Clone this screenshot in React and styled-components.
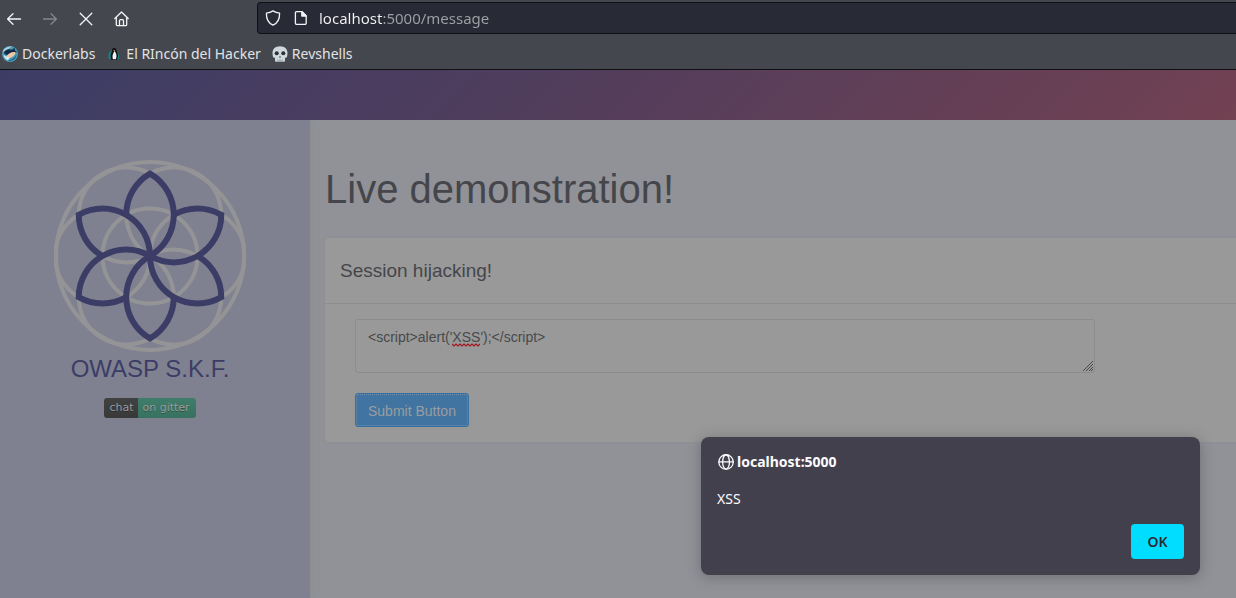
import React from "react";
import styled, { createGlobalStyle } from "styled-components";

const UI_FONT = '"Noto Sans", sans-serif';
const PAGE_FONT = '"Liberation Sans", Arial, sans-serif';

const GlobalStyle = createGlobalStyle`
  *, *::before, *::after { box-sizing: border-box; }
  body { margin: 0; background: #919297; }
  button, input, textarea { font: inherit; margin: 0; }
`;

const Window = styled.div`
  position: relative;
  min-height: 100vh;
  display: flex;
  flex-direction: column;
  overflow: hidden;
  font-family: ${UI_FONT};
`;

const Chrome = styled.header`
  background: #44474d;
  border-bottom: 1px solid #0f1014;
`;

const NavBar = styled.div`
  display: flex;
  align-items: center;
  height: 38px;
`;

const NavButtons = styled.nav`
  display: flex;
  flex: none;
  gap: 8px;
  width: 257px;
`;

const IconButton = styled.button`
  display: flex;
  align-items: center;
  justify-content: center;
  width: 28px;
  height: 28px;
  padding: 0;
  border: 0;
  background: none;
  color: ${(p) => (p.disabled ? "#85878b" : "#f4f4f6")};
`;

const AddressBar = styled.label`
  display: flex;
  flex: 1;
  align-items: center;
  height: 32px;
  margin-top: -2px;
  padding-left: 7px;
  background: #282a36;
  border: 1px solid #0f1014;
  border-right: 0;
  border-radius: 4px 0 0 4px;
  color: #f4f4f6;

  svg { flex: none; margin-right: 12px; }
`;

const AddressInput = styled.input`
  flex: 1;
  min-width: 0;
  height: 24px;
  margin-left: -2px;
  padding: 0;
  border: 0;
  outline: 0;
  font-size: 15px;
  line-height: 24px;
  color: transparent;
  background: linear-gradient(to right, #f4f4f6 64px, #a0a1a6 64px);
  background-clip: text;
`;

const Bookmarks = styled.nav`
  display: flex;
  align-items: center;
  gap: 11px;
  height: 31px;
  padding-left: 2px;
`;

const Bookmark = styled.a`
  display: flex;
  align-items: center;
  gap: 4px;
  font-size: 14px;
  line-height: 20px;
  color: #e2e2e5;
  text-decoration: none;
  white-space: nowrap;
`;

const Banner = styled.div`
  height: 50px;
  background: linear-gradient(135deg, #3c3d66 0%, #513d5c 45%, #724152 100%);
`;

const Body = styled.div`
  flex: 1;
  display: flex;
  overflow: hidden;
  font-family: ${PAGE_FONT};
`;

const Sidebar = styled.aside`
  flex: none;
  width: 310px;
  display: flex;
  flex-direction: column;
  align-items: center;
  padding: 40px 10px 0 0;
  background: #808190;
  box-shadow: 0 0 8px #8b8c92;
  z-index: 1;
`;

const Brand = styled.div`
  margin-top: 1px;
  font-size: 24px;
  line-height: 32px;
  color: #3c3d66;
`;

const Badge = styled.a`
  display: flex;
  margin-top: 13px;
  border-radius: 3px;
  overflow: hidden;
  font-family: "DejaVu Sans", sans-serif;
  font-size: 11px;
  line-height: 20px;
  color: #9b9b9b;
  text-decoration: none;
  text-shadow: 0 1px 0 rgba(0, 0, 0, 0.3);
`;

const BadgePart = styled.span`
  padding: 0 ${(p) => (p.$accent ? 6 : 5)}px 0 ${(p) => (p.$accent ? 4 : 5)}px;
  background: ${(p) =>
    p.$accent
      ? "linear-gradient(#3f7d6a, #387160)"
      : "linear-gradient(#414141, #393939)"};
`;

const Main = styled.main`
  flex: 1;
  min-width: 0;
  padding: 45px 0 0 15px;
  background: #919297;
`;

const Title = styled.h1`
  margin: 0;
  font-size: 40px;
  font-weight: 400;
  line-height: 48px;
  color: #45464b;
`;

const Card = styled.section`
  margin-top: 25px;
  background: #999999;
  border-radius: 4px 0 0 4px;
  box-shadow: 0 0 2px #888990;
`;

const CardHeader = styled.h2`
  margin: 0;
  padding: 21px 15px 20px;
  border-bottom: 1px solid #8c8d90;
  font-size: 19px;
  font-weight: 400;
  line-height: 24px;
  color: #45464b;
`;

const Form = styled.form`
  padding: 15px 0 15px 30px;
`;

const Field = styled.div`
  position: relative;
  width: 84%;
`;

const Message = styled.textarea`
  display: block;
  width: 100%;
  height: 54px;
  padding: 7px 12px;
  border: 1px solid #8b8c8f;
  border-radius: 3px;
  outline: 0;
  resize: none;
  background: transparent;
  font-size: 14px;
  line-height: 20px;
  color: #48494c;
`;

const Squiggle = styled.svg`
  position: absolute;
  left: 97px;
  top: 24px;
`;

const Grip = styled.svg`
  position: absolute;
  right: 2px;
  bottom: 2px;
`;

const Submit = styled.button`
  display: block;
  height: 34px;
  margin-top: 20px;
  padding: 2px 12px 0;
  border: 1px solid #376f9f;
  border-radius: 3px;
  outline: 1px dotted #7291ac;
  outline-offset: -2px;
  background: #4174a0;
  font-size: 14px;
  line-height: 20px;
  color: #9a9da1;
`;

const Dialog = styled.section`
  position: absolute;
  right: 36px;
  top: 437px;
  z-index: 2;
  width: 499px;
  padding: 15px 16px 16px;
  display: flex;
  flex-direction: column;
  background: #43404d;
  border-radius: 8px;
  box-shadow: 0 2px 14px rgba(58, 57, 68, 0.4);
  color: #fbfbfe;
`;

const DialogTitle = styled.h2`
  display: flex;
  align-items: center;
  gap: 3px;
  margin: 0;
  font-size: 14px;
  font-weight: 700;
  line-height: 20px;
`;

const DialogText = styled.p`
  margin: 17px 0 15px;
  font-size: 14px;
  line-height: 20px;
`;

const OkButton = styled.button`
  align-self: flex-end;
  width: 53px;
  height: 35px;
  padding: 0;
  border: 0;
  border-radius: 4px;
  background: #00ddff;
  font-size: 14px;
  font-weight: 600;
  color: #2b2a33;
`;

const Line = ({ children, size = 16, width = 1.3 }) => (
  <svg
    width={size}
    height={size}
    viewBox="0 0 16 16"
    fill="none"
    stroke="currentColor"
    strokeWidth={width}
    strokeLinecap="round"
    strokeLinejoin="round"
    aria-hidden="true"
  >
    {children}
  </svg>
);

const ArrowLeft = () => (
  <Line>
    <path d="M14.5 8H1.8M7 2.7L1.6 8 7 13.3" />
  </Line>
);

const ArrowRight = () => (
  <Line>
    <path d="M1.5 8h12.7M9 2.7L14.4 8 9 13.3" />
  </Line>
);

const Stop = () => (
  <Line>
    <path d="M2.2 2.2l11.6 11.6M13.8 2.2L2.2 13.8" />
  </Line>
);

const Home = () => (
  <Line>
    <path d="M.8 7.500L7.500 1l6.700 6.500M2.300 6.500v7a1.200 1.200 0 0 0 1.200 1.200h8a1.200 1.200 0 0 0 1.200-1.200v-7" />
    <path d="M5.500 14.500V9.700a1 1 0 0 1 1-1h2a1 1 0 0 1 1 1v4.800" />
  </Line>
);

const Shield = () => (
  <Line>
    <path d="M8 .9c2 1.3 4 2 6.6 2.3.1 5.6-1.4 9.7-6.6 12C2.8 12.9 1.3 8.8 1.4 3.2 4 2.9 6 2.2 8 .9z" />
  </Line>
);

const PageIcon = () => (
  <Line>
    <path d="M3.6 1.7h5.6l4 4v7.4a1.2 1.2 0 0 1-1.2 1.2H3.6a1.2 1.2 0 0 1-1.2-1.2V2.9a1.2 1.2 0 0 1 1.2-1.2z" />
    <path d="M8.8 1.7v4.4h4.4z" fill="currentColor" />
  </Line>
);

const Globe = () => (
  <Line size={17} width={1.2}>
    <circle cx="8.500" cy="7.500" r="6.800" />
    <ellipse cx="8.500" cy="7.500" rx="3.200" ry="6.800" />
    <path d="M1.700 7.500h13.600" />
  </Line>
);

const Whale = () => (
  <svg width="16" height="16" viewBox="0 0 16 16" aria-hidden="true">
    <circle cx="8" cy="8" r="8" fill="#4a9bb5" />
    <path d="M1 4.5C3 1.5 7 0 10 .5l-3 2-5 4z" fill="#a9cfdb" />
    <path d="M2 6c2-3 5-3.500 8-2.200l2.500-2 .5 2.700 2 1.500-3.500 1.500C8.500 6.500 7 8.500 5 9L2.500 8z" fill="#142b47" />
    <path d="M4.500 10.500C6.500 7 9.500 5.500 13.500 6 13.500 9.500 9 12.500 5.500 12z" fill="#f0c9a4" />
    <path d="M1.500 9l3 1.500 3.500 1-2 2.800C3.500 13.500 2 11.500 1.500 9z" fill="#dce7ec" />
    <path d="M6 14.5c4-.5 7-3 8.500-6-.2 4-3.500 7-8.500 6z" fill="#1d5f86" />
  </svg>
);

const Penguin = () => (
  <svg width="16" height="16" viewBox="0 0 16 16" aria-hidden="true">
    <path d="M6 4C3 5.500 1.800 9 2.800 13h3zM10.500 5.500c2.500 1.500 3.200 4.500 2.500 7.500h-2z" fill="#18818a" />
    <path d="M8 2c2 0 2.700 1.500 2.700 3.500 1.700 2.500 1.900 6-.2 8.500H5.500C4 11 4.500 8 5.800 5.500 5.800 3.500 6.500 2 8 2z" fill="#0c0f14" />
    <path d="M8.500 5c2 2 2.700 5.500 1.300 8.300H6.900C5.900 10.500 6.700 7.500 8.500 5z" fill="#f2f2f2" />
    <path d="M7.500 3.800l2 .6-1.800.8z" fill="#d9a44a" />
  </svg>
);

const Skull = () => (
  <svg width="16" height="16" viewBox="0 0 16 16" aria-hidden="true">
    <path
      d="M8 .2c4.500 0 7.500 2.800 7.500 6.500 0 1.500-.3 2.500-.3 3.300 0 1.300-1.300 1.800-2.200 2v2.400c0 .8-.5 1.400-1.200 1.400H4.200c-.7 0-1.200-.6-1.200-1.400V12C2.100 11.800.8 11.300.8 10c0-.8-.3-1.800-.3-3.300C.5 3 3.500.2 8 .2z"
      fill="#cfd8dd"
    />
    <circle cx="4.700" cy="7.200" r="2" fill="#2b3136" />
    <circle cx="11.300" cy="7.200" r="2" fill="#2b3136" />
    <path d="M8 9.800l1 1.600H7z" fill="#2b3136" />
    <path d="M6 13.500v2.200M8 13.500v2.200M10 13.500v2.200" stroke="#6f7a81" strokeWidth=".7" />
  </svg>
);

const TURNS = [0, 60, 120, 180, 240, 300];

const FlowerLogo = () => (
  <svg width="192" height="192" viewBox="-96 -96 192 192" fill="none" role="img" aria-label="OWASP S.K.F.">
    <g stroke="#949497" strokeWidth="4">
      <circle r="94" />
      <circle r="47.5" />
      {TURNS.map((a) => (
        <circle key={a} cx="47.5" r="47.5" transform={`rotate(${a})`} />
      ))}
    </g>
    <g stroke="#3c3d66" strokeWidth="6">
      {TURNS.map((a) => (
        <path
          key={a}
          transform={`rotate(${a})`}
          d="M0 0A47.5 47.5 0 0 0 0-82.300A47.5 47.5 0 0 0-23.750-41.100"
        />
      ))}
    </g>
  </svg>
);

export default function App() {
  return (
    <>
      <GlobalStyle />
      <Window>
        <Chrome>
          <NavBar>
            <NavButtons aria-label="Navigation">
              <IconButton type="button" aria-label="Back"><ArrowLeft /></IconButton>
              <IconButton type="button" aria-label="Forward" disabled><ArrowRight /></IconButton>
              <IconButton type="button" aria-label="Stop"><Stop /></IconButton>
              <IconButton type="button" aria-label="Home"><Home /></IconButton>
            </NavButtons>
            <AddressBar>
              <Shield />
              <PageIcon />
              <AddressInput aria-label="Address" defaultValue="localhost:5000/message" spellCheck={false} />
            </AddressBar>
          </NavBar>
          <Bookmarks aria-label="Bookmarks">
            <Bookmark href="#dockerlabs"><Whale />Dockerlabs</Bookmark>
            <Bookmark href="#rincon"><Penguin />El RIncón del Hacker</Bookmark>
            <Bookmark href="#revshells"><Skull />Revshells</Bookmark>
          </Bookmarks>
        </Chrome>
        <Banner />
        <Body>
          <Sidebar>
            <FlowerLogo />
            <Brand>OWASP S.K.F.</Brand>
            <Badge href="#gitter">
              <BadgePart>chat</BadgePart>
              <BadgePart $accent>on gitter</BadgePart>
            </Badge>
          </Sidebar>
          <Main>
            <Title>Live demonstration!</Title>
            <Card>
              <CardHeader>Session hijacking!</CardHeader>
              <Form onSubmit={(e) => e.preventDefault()}>
                <Field>
                  <Message
                    aria-label="Message"
                    spellCheck={false}
                    defaultValue={"<script>alert('XSS');</script>"}
                  />
                  <Squiggle width="28" height="4" viewBox="0 0 28 4" fill="none" aria-hidden="true">
                    <path
                      d="M0 1l2 2 2-2 2 2 2-2 2 2 2-2 2 2 2-2 2 2 2-2 2 2 2-2 2 2 2-2"
                      stroke="#a3141c"
                      strokeWidth="1.2"
                    />
                  </Squiggle>
                  <Grip width="10" height="10" viewBox="0 0 10 10" aria-hidden="true">
                    <path d="M0 10L10 0M3 10l7-7M6 10l4-4M8 10l2-2" stroke="#4a4a4d" strokeWidth="1" />
                  </Grip>
                </Field>
                <Submit type="submit">Submit Button</Submit>
              </Form>
            </Card>
          </Main>
        </Body>
        <Dialog role="dialog" aria-labelledby="dialog-title">
          <DialogTitle id="dialog-title"><Globe />localhost:5000</DialogTitle>
          <DialogText>XSS</DialogText>
          <OkButton type="button">OK</OkButton>
        </Dialog>
      </Window>
    </>
  );
}
